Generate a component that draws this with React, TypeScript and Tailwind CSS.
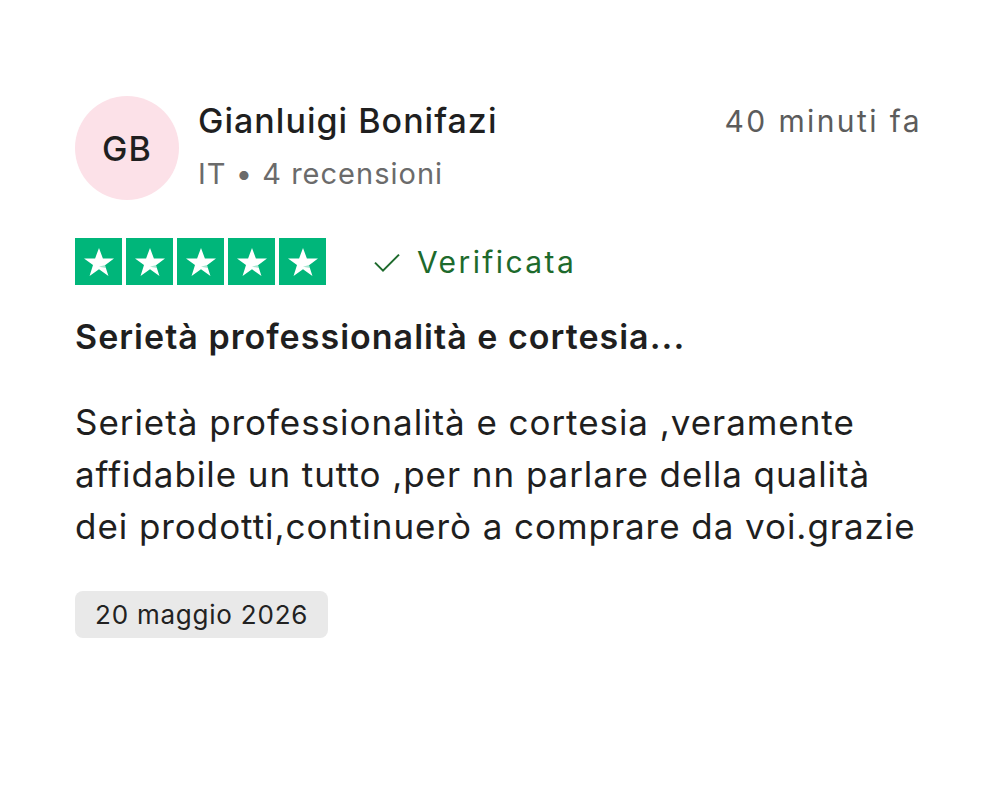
import React from 'react';

const Star = () => (
  <div className="w-[47px] h-[47px] bg-[#00b67a] flex items-center justify-center">
    <svg viewBox="0 0 24 24" className="w-[36px] h-[36px]">
      <path d="M12 2.6l2.6 7.1h7.4l-6 4.4 2.3 7.3L12 16.9l-6.3 4.4 2.3-7.3-6-4.4h7.4z" fill="#ffffff" />
      <path d="M16 14l0.6 2-4.6-.9z" fill="#00b67a" opacity="0.35" />
    </svg>
  </div>
);

export default function ReviewCard() {
  return (
    <div className="w-[1000px] h-[806px] bg-white font-['Inter',sans-serif] text-[#1f1f1f] pl-[75px] pr-[78px] pt-[96px]">
      {/* header: avatar, author, time */}
      <div className="flex items-start">
        <div className="w-[104px] h-[104px] rounded-full bg-[#fce1e8] flex items-center justify-center text-[34px] font-medium tracking-[0.03em] text-[#1f1f1f]">
          GB
        </div>
        <div className="ml-[19px] pt-[5px] flex-1">
          <div className="text-[34px] font-medium leading-[40px] tracking-[0.03em]">Gianluigi Bonifazi</div>
          <div className="text-[29px] leading-[36px] mt-[15px] tracking-[0.035em] text-[#6b6b6b]">IT • 4 recensioni</div>
        </div>
        <div className="pt-[5px] text-[30px] leading-[40px] tracking-[0.08em] text-[#5c5c5c]">40 minuti fa</div>
      </div>

      {/* rating row */}
      <div className="flex items-center mt-[38px]">
        <div className="flex gap-[4px]">
          <Star />
          <Star />
          <Star />
          <Star />
          <Star />
        </div>
        <div className="flex items-center ml-[45px] text-[#1d6a2c]">
          <svg viewBox="0 0 24 24" className="w-[32px] h-[32px]" fill="none" stroke="currentColor" strokeWidth="1.5">
            <path d="M3 12.5l6 6L21 6.5" />
          </svg>
          <span className="ml-[14px] text-[30px] leading-[40px] tracking-[0.08em]">Verificata</span>
        </div>
      </div>

      <div className="mt-[32px] text-[34px] font-semibold leading-[40px] tracking-[0.03em]">
        Serietà professionalità e cortesia...
      </div>

      <p className="mt-[39px] text-[35px] leading-[52px] tracking-[0.027em]">
        <span className="block">Serietà professionalità e cortesia ,veramente</span>
        <span className="block">affidabile un tutto ,per nn parlare della qualità</span>
        <span className="block">dei prodotti,continuerò a comprare da voi.grazie</span>
      </p>

      <div className="mt-[39px] inline-flex items-center h-[47px] px-[20px] rounded-[8px] bg-[#e9e9e9] text-[26px] tracking-[0.03em] text-[#222]">
        20 maggio 2026
      </div>
    </div>
  );
}
